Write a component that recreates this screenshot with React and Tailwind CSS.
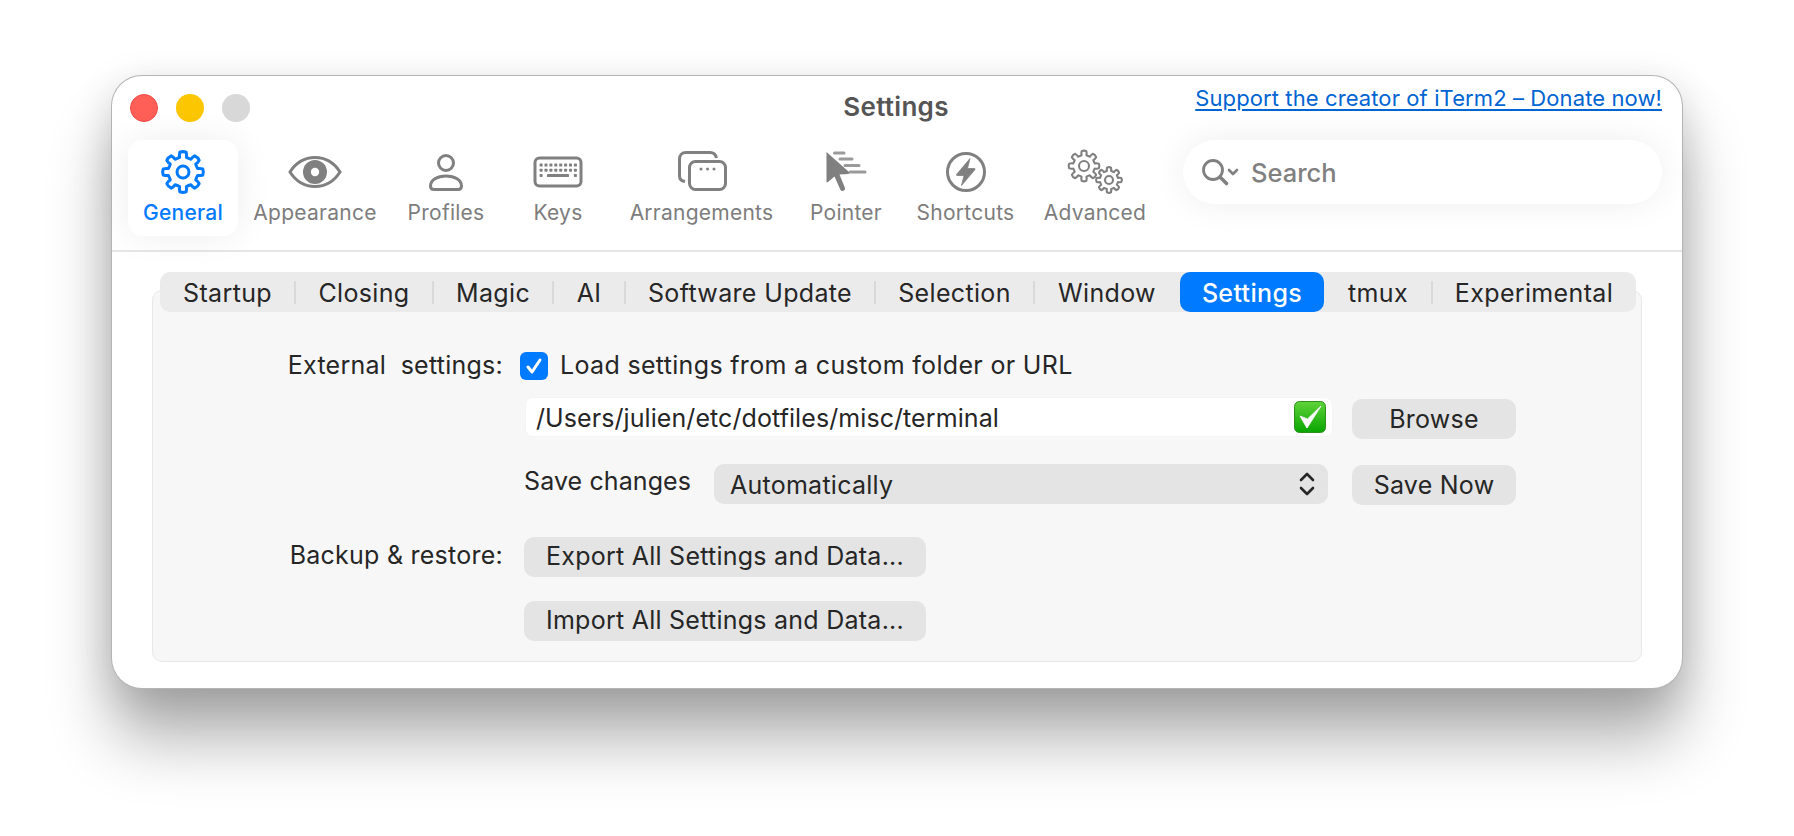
import React from 'react';

// builds a rounded-ish cog outline around (cx, cy)
const gearPath = (cx, cy, outer, inner, teeth = 8) => {
    const step = (Math.PI * 2) / teeth;
    const pt = (r, a) => `${(cx + r * Math.cos(a)).toFixed(2)} ${(cy + r * Math.sin(a)).toFixed(2)}`;
    let d = '';
    for (let i = 0; i < teeth; i++) {
        const a = i * step - Math.PI / 2;
        const w = step * 0.2;
        const b = step * 0.29;
        d += `${i === 0 ? 'M' : 'L'}${pt(inner, a - b)} Q${pt(inner + (outer - inner) * 0.5, a - b)} ${pt(outer, a - w)} Q${pt(outer + 1, a)} ${pt(outer, a + w)} Q${pt(inner + (outer - inner) * 0.5, a + b)} ${pt(inner, a + b)} `;
        d += `Q${pt(inner * 0.97, a + step / 2)} ${pt(inner, a + step - b)} `;
    }
    return d + 'Z';
};

const GearIcon = () => (
    <svg width="48" height="48" viewBox="0 0 48 48" fill="none" stroke="#007aff" strokeWidth="3" strokeLinejoin="round">
        <path d={gearPath(24, 24, 20, 15)} />
        <circle cx="24" cy="24" r="6" />
    </svg>
);

const EyeIcon = () => (
    <svg width="56" height="48" viewBox="0 0 56 48" fill="none">
        <path d="M3 24 C10 13 18 9.5 28 9.5 C38 9.5 46 13 53 24 C46 35 38 38.5 28 38.5 C18 38.5 10 35 3 24 Z" stroke="#808080" strokeWidth="3" />
        <circle cx="28" cy="24" r="12" fill="#808080" />
        <circle cx="28" cy="24" r="4.2" fill="#fff" />
    </svg>
);

const PersonIcon = () => (
    <svg width="48" height="48" viewBox="0 0 48 48" fill="none" stroke="#808080" strokeWidth="3">
        <circle cx="24" cy="15" r="7.5" />
        <path d="M8.5 38 C8.5 32 15 28 24 28 C33 28 39.5 32 39.5 38 C39.5 40.5 38.5 41.5 36 41.5 H12 C9.5 41.5 8.5 40.5 8.5 38 Z" />
    </svg>
);

const KeyboardIcon = () => {
    const dots = [];
    for (let r = 0; r < 3; r++) {
        for (let c = 0; c < 8; c++) {
            if (r === 2 && c > 0 && c < 7) continue;
            dots.push(<rect key={`${r}-${c}`} x={7.6 + c * 4.9} y={15.5 + r * 5.2} width="3" height="3" rx="0.6" fill="#808080" />);
        }
    }
    return (
        <svg width="52" height="48" viewBox="0 0 52 48" fill="none">
            <rect x="3" y="10" width="46" height="28" rx="4.5" stroke="#808080" strokeWidth="3" />
            {dots}
            <rect x="15" y="26" width="22" height="3" rx="0.6" fill="#808080" />
        </svg>
    );
};

const ArrangementsIcon = () => (
    <svg width="52" height="48" viewBox="0 0 52 48" fill="none" stroke="#808080" strokeWidth="3">
        <path d="M9 33.5 C5.5 33 3.5 31 3.5 28 V11 C3.5 7 6 4.5 10 4.5 H34 C37.5 4.5 39.8 6.5 40.4 10" />
        <rect x="13.5" y="13.5" width="36" height="28" rx="6" />
        <circle cx="25" cy="21" r="1.5" fill="#808080" stroke="none" />
        <circle cx="31.5" cy="21" r="1.5" fill="#808080" stroke="none" />
        <circle cx="38" cy="21" r="1.5" fill="#808080" stroke="none" />
    </svg>
);

const PointerIcon = () => (
    <svg width="48" height="48" viewBox="0 0 48 48" fill="none">
        <path d="M4.5 4 L4.5 33.5 Q4.5 35 6 34 L12.5 28.5 L18.5 42 Q19.5 43.6 21.5 42.8 Q23.5 42 23 40 L17.5 26.5 L26.5 26 Q28 25.5 27 24 Z" fill="#808080" />
        <path d="M12.5 5 H22 M18 11 H30 M23 17.5 H37 M28 24 H43" stroke="#9a9a9a" strokeWidth="3" strokeLinecap="round" />
    </svg>
);

const BoltIcon = () => (
    <svg width="44" height="48" viewBox="0 0 44 48" fill="none">
        <ellipse cx="22" cy="24" rx="18.5" ry="18.5" stroke="#808080" strokeWidth="3" />
        <path d="M26 10.5 L12.5 26.5 Q12 27.5 13.5 27.5 H20 L17.5 37.5 L31 21.5 Q31.5 20.5 30 20.5 H23.5 Z" fill="#808080" stroke="#808080" strokeWidth="0.8" strokeLinejoin="round" />
    </svg>
);

const GearsIcon = () => (
    <svg width="60" height="48" viewBox="0 0 60 48" fill="none" stroke="#808080" strokeWidth="2.1" strokeLinejoin="round">
        <path d={gearPath(19, 18, 15, 11)} />
        <circle cx="19" cy="18" r="5" />
        <path d={gearPath(44, 32, 12.5, 9.3)} />
        <circle cx="44" cy="32" r="4" />
    </svg>
);

const SearchIcon = () => (
    <svg width="40" height="32" viewBox="0 0 40 32" fill="none" stroke="#808080" strokeLinecap="round" strokeLinejoin="round">
        <circle cx="12" cy="14" r="9.5" strokeWidth="2.8" />
        <path d="M19 21 L25.5 27.5" strokeWidth="3.6" />
        <path d="M28 14 L32 18 L36 14" strokeWidth="2.6" />
    </svg>
);

const toolbarItems = [
    { label: 'General', icon: <GearIcon />, width: 'w-[110px]', active: true },
    { label: 'Appearance', icon: <EyeIcon />, width: 'w-[154px]' },
    { label: 'Profiles', icon: <PersonIcon />, width: 'w-[108px]' },
    { label: 'Keys', icon: <KeyboardIcon />, width: 'w-[116px]' },
    { label: 'Arrangements', icon: <ArrangementsIcon />, width: 'w-[171px]' },
    { label: 'Pointer', icon: <PointerIcon />, width: 'w-[118px]' },
    { label: 'Shortcuts', icon: <BoltIcon />, width: 'w-[121px]' },
    { label: 'Advanced', icon: <GearsIcon />, width: 'w-[138px]' },
];

const tabs = [
    { label: 'Startup', width: 'w-[135px]' },
    { label: 'Closing', width: 'w-[138px]' },
    { label: 'Magic', width: 'w-[120px]' },
    { label: 'AI', width: 'w-[72px]' },
    { label: 'Software Update', width: 'w-[250px]' },
    { label: 'Selection', width: 'w-[159px]' },
    { label: 'Window', width: 'w-[146px]' },
    { label: 'Settings', width: 'w-[144px]', active: true },
    { label: 'tmux', width: 'w-[108px]' },
    { label: 'Experimental', width: 'w-[204px]', last: true },
];

const PillButton = ({ className, children }) => (
    <button className={`h-[40px] rounded-[10px] bg-[#e4e4e4] text-[#262626] text-[25px] tracking-[0.25px] leading-none flex items-center justify-center ${className}`}>
        {children}
    </button>
);

const App = () => {
    return (
        <div className="w-[1794px] h-[836px] bg-white overflow-hidden pt-[76px] pl-[112px] text-[#262626] font-['Inter','Liberation_Sans',sans-serif]">
            <div className="w-[1570px] h-[612px] rounded-[30px] bg-white ring-1 ring-[#b4b4b4] shadow-[0_52px_64px_rgba(0,0,0,0.3),0_10px_40px_rgba(0,0,0,0.15)] flex flex-col">
                {/* Title bar */}
                <div className="h-[64px] pl-[18px] pr-[20px] grid grid-cols-[1fr_auto_1fr] items-start">
                    <div className="flex gap-[18px] pt-[18px]">
                        <span className="w-[28px] h-[28px] rounded-full bg-[#ff5f57] border border-[#ea4a44]" />
                        <span className="w-[28px] h-[28px] rounded-full bg-[#fcc700]" />
                        <span className="w-[28px] h-[28px] rounded-full bg-[#d8d8d8]" />
                    </div>
                    <div className="pt-[15px] text-[26px] tracking-[0.3px] leading-[32px] font-semibold text-[#555555]">Settings</div>
                    <div className="pt-[8px] text-right">
                        <a className="text-[22px] tracking-[0.1px] leading-[28px] text-[#0064d2] underline underline-offset-[3px] decoration-[2px] whitespace-nowrap">
                            Support the creator of iTerm2 – Donate now!
                        </a>
                    </div>
                </div>

                {/* Toolbar */}
                <div className="h-[112px] pl-[16px] flex items-start border-b-2 border-[#e6e6e6]">
                    {toolbarItems.map((item) => (
                        <div
                            key={item.label}
                            className={`${item.width} h-[96px] rounded-[14px] flex flex-col items-center pt-[8px] ${item.active ? 'bg-white shadow-[0_0_36px_rgba(0,0,0,0.07)]' : ''}`}
                        >
                            <div className="h-[48px] flex items-center justify-center">{item.icon}</div>
                            <div className={`mt-[4px] text-[21px] tracking-[0.25px] leading-[26px] whitespace-nowrap ${item.active ? 'text-[#007aff] font-medium' : 'text-[#7d7d7d]'}`}>
                                {item.label}
                            </div>
                        </div>
                    ))}
                    <div className="ml-[19px] w-[479px] h-[64px] rounded-full bg-white shadow-[0_0_36px_rgba(0,0,0,0.07)] flex items-center pl-[18px]">
                        <SearchIcon />
                        <span className="ml-[10px] pt-[3px] text-[25.5px] font-medium text-[#808080]">Search</span>
                    </div>
                </div>

                {/* Tabs and panel */}
                <div className="flex-1 pt-[20px]">
                    <div className="relative z-10 ml-[48px] w-[1476px] h-[40px] rounded-[10px] bg-[#ebebeb] flex items-center">
                        {tabs.map((tab) => (
                            <div
                                key={tab.label}
                                className={`${tab.width} h-[40px] pt-[2px] flex items-center justify-center text-[25px] tracking-[0.35px] leading-none ${tab.active ? 'rounded-[10px] bg-[#007aff] text-white font-medium' : ''}`}
                            >
                                {tab.label}
                            </div>
                        ))}
                        <span className="absolute left-[134px] top-[9px] w-[2px] h-[23px] bg-[#d9d9d9]" />
                        <span className="absolute left-[272px] top-[9px] w-[2px] h-[23px] bg-[#d9d9d9]" />
                        <span className="absolute left-[392px] top-[9px] w-[2px] h-[23px] bg-[#d9d9d9]" />
                        <span className="absolute left-[464px] top-[9px] w-[2px] h-[23px] bg-[#d9d9d9]" />
                        <span className="absolute left-[714px] top-[9px] w-[2px] h-[23px] bg-[#d9d9d9]" />
                        <span className="absolute left-[873px] top-[9px] w-[2px] h-[23px] bg-[#d9d9d9]" />
                        <span className="absolute left-[1271px] top-[9px] w-[2px] h-[23px] bg-[#d9d9d9]" />
                    </div>

                    <div className="mt-[-22px] mx-[40px] h-[372px] rounded-[10px] bg-[#f7f7f7] border border-[#e8e8e8] pt-[61px] text-[25px] tracking-[0.25px]">
                        <div className="h-[28px] flex items-center">
                            <div className="w-[350px] pb-[2px] text-right whitespace-pre leading-none">External  settings:</div>
                            <span className="ml-[17px] w-[28px] h-[28px] rounded-[6px] bg-[#007aff] flex items-center justify-center">
                                <svg width="20" height="20" viewBox="0 0 20 20" fill="none" stroke="#fff" strokeWidth="3" strokeLinecap="round" strokeLinejoin="round">
                                    <path d="M4 11 L8 16 L16 4" />
                                </svg>
                            </span>
                            <span className="ml-[12px] pb-[2px] tracking-[0.33px] leading-none">Load settings from a custom folder or URL</span>
                        </div>

                        <div className="mt-[18px] ml-[373px] flex items-start">
                            <div className="w-[806px] h-[38px] rounded-[6px] bg-white flex items-center justify-between pl-[10px] pr-[6px] shadow-[0_0_2px_rgba(0,0,0,0.06)]">
                                <span className="pt-[2px] tracking-[0.08px] leading-none">/Users/julien/etc/dotfiles/misc/terminal</span>
                                <svg width="32" height="32" viewBox="0 0 32 32">
                                    <defs>
                                        <linearGradient id="checkGreen" x1="0" y1="0" x2="0" y2="1">
                                            <stop offset="0" stopColor="#5fd33a" />
                                            <stop offset="1" stopColor="#08a400" />
                                        </linearGradient>
                                    </defs>
                                    <rect x="0.5" y="0.5" width="31" height="31" rx="5" fill="url(#checkGreen)" stroke="#2f8f1c" />
                                    <path d="M6 15 L13 27 L27 5 L13.5 18 Z" fill="#fff" stroke="#f1f1f1" strokeWidth="1" strokeLinejoin="round" />
                                </svg>
                            </div>
                            <PillButton className="ml-[20px] mt-[1px] w-[164px]">Browse</PillButton>
                        </div>

                        <div className="mt-[25px] ml-[371px] flex items-start">
                            <div className="w-[190px] tracking-[0.1px] leading-[34px]">Save changes</div>
                            <div className="w-[614px] h-[40px] rounded-[10px] bg-[#e4e4e4] flex items-center justify-between pl-[16px] pr-[12px]">
                                <span className="pt-[2px] leading-none">Automatically</span>
                                <svg width="18" height="26" viewBox="0 0 18 26" fill="none" stroke="#262626" strokeWidth="2.6" strokeLinecap="round" strokeLinejoin="round">
                                    <path d="M3 9 L9 3 L15 9 M3 17 L9 23 L15 17" />
                                </svg>
                            </div>
                            <PillButton className="ml-[24px] mt-[1px] w-[164px]">Save Now</PillButton>
                        </div>

                        <div className="mt-[32px] flex items-start">
                            <div className="w-[350px] text-right leading-[36px]">Backup &amp; restore:</div>
                            <PillButton className="ml-[21px] w-[402px] pb-[2px]">Export All Settings and Data...</PillButton>
                        </div>

                        <PillButton className="mt-[24px] ml-[371px] w-[402px] pb-[2px]">Import All Settings and Data...</PillButton>
                    </div>
                </div>
            </div>
        </div>
    );
};

export default App;
